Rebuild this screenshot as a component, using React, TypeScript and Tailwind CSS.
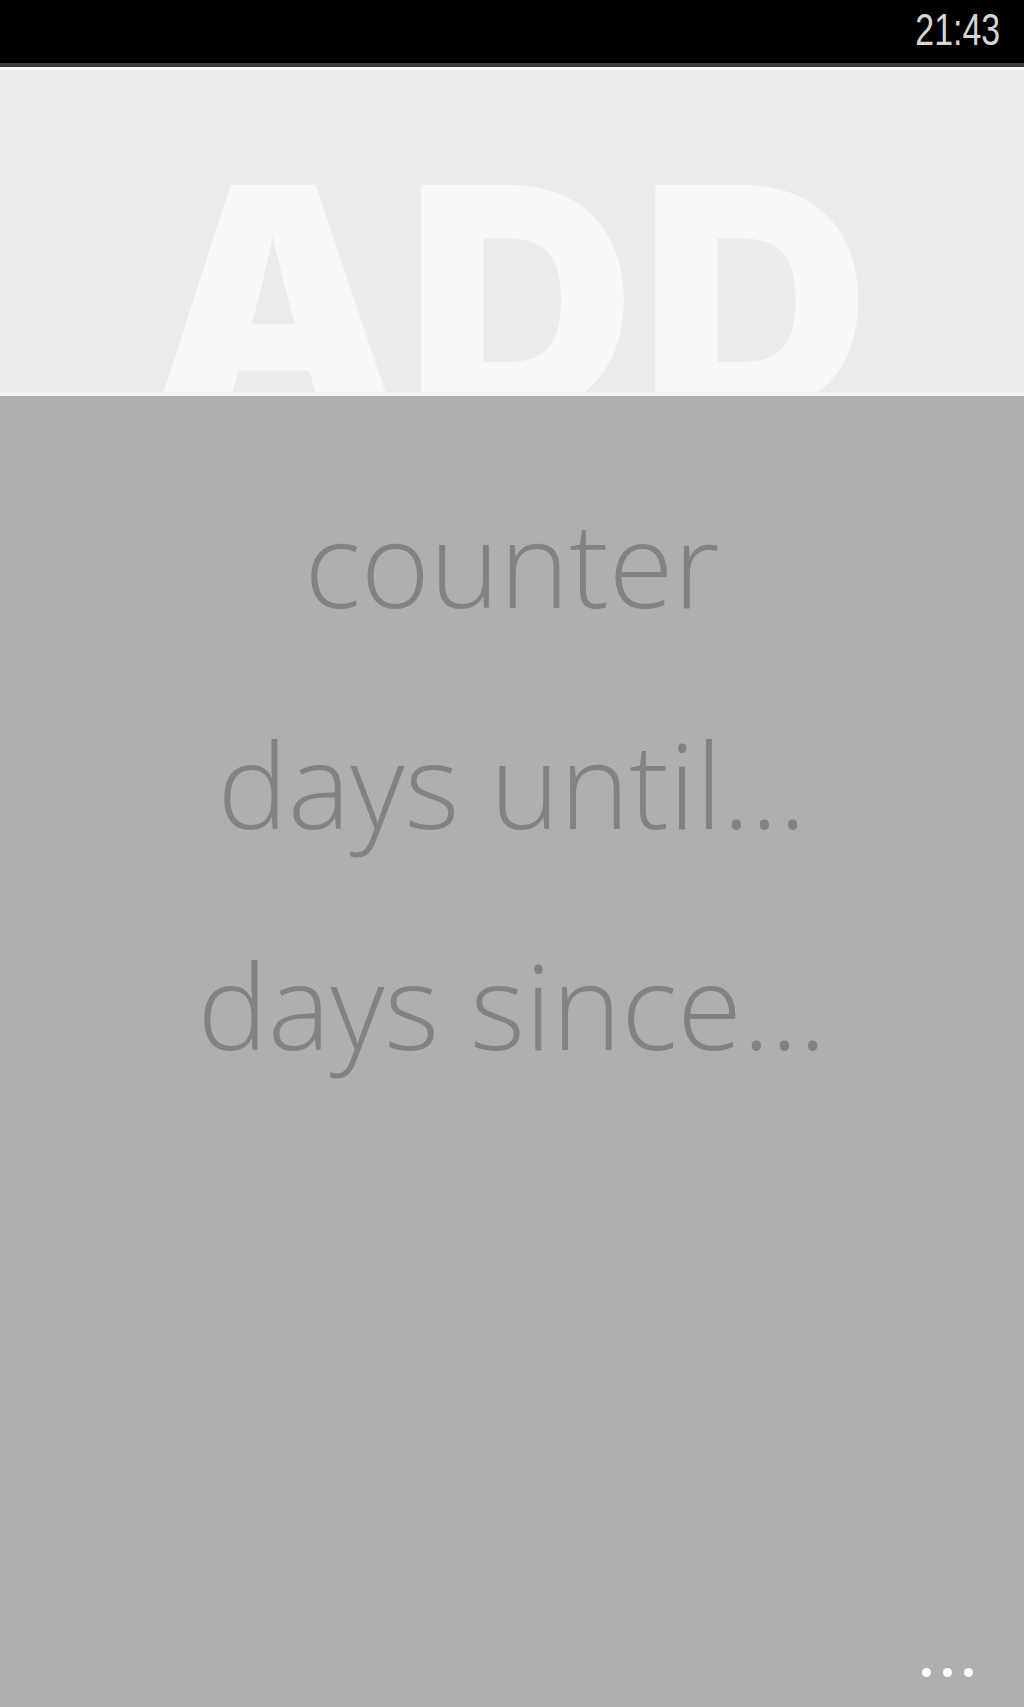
import React from 'react';

const items = ['counter', 'days until...', 'days since...'];

function StatusBar() {
  return (
    <div className="h-[63px] bg-black flex justify-end pr-[24px] pt-[8px] shrink-0">
      <span
        className="text-[44px] leading-none text-[#d6d6d6] origin-right scale-x-[0.77]"
        style={{ fontFamily: '"Liberation Sans", Arial, sans-serif' }}
      >
        21:43
      </span>
    </div>
  );
}

function PivotHeader() {
  return (
    <div className="h-[333px] shrink-0 bg-[#ececec] border-t-[4px] border-t-[#3c3c3c] overflow-hidden">
      <div className="h-full border-t-[3px] border-t-[#f7f7f7] border-b-[4px] border-b-[#f3f3f3] overflow-hidden flex justify-center">
        <h1
          className="text-[316px] font-black leading-none text-[#f8f8f8] pt-[72px] tracking-[6px] whitespace-nowrap"
          style={{ fontFamily: 'Inter, "Liberation Sans", Arial, sans-serif' }}
        >
          ADD
        </h1>
      </div>
    </div>
  );
}

export default function App() {
  return (
    <div className="w-[1024px] h-[1707px] flex flex-col bg-[#afafaf] overflow-hidden">
      <StatusBar />
      <PivotHeader />
      <div className="flex-1 flex flex-col items-center pt-[56px]">
        {items.map((label) => (
          <div
            key={label}
            className="text-[118px] font-light leading-[221px] text-[#828282] whitespace-nowrap"
            style={{ fontFamily: '"Open Sans", "Segoe UI", sans-serif' }}
          >
            {label}
          </div>
        ))}
      </div>
      <div className="flex justify-end gap-[12px] pr-[51px] pb-[30px] shrink-0">
        <span className="w-[9px] h-[9px] rounded-full bg-white" />
        <span className="w-[9px] h-[9px] rounded-full bg-white" />
        <span className="w-[9px] h-[9px] rounded-full bg-white" />
      </div>
    </div>
  );
}
